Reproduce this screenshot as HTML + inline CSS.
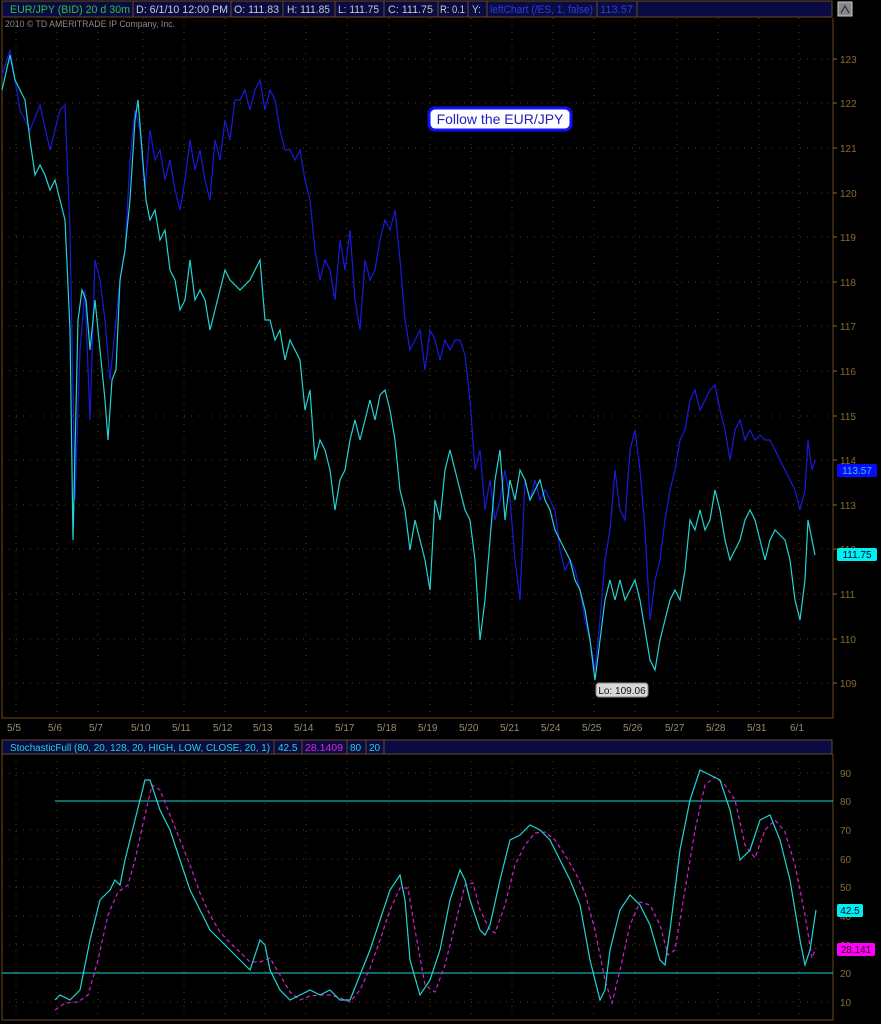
<!DOCTYPE html>
<html><head><meta charset="utf-8"><style>
html,body{margin:0;padding:0;background:#000;width:881px;height:1024px;overflow:hidden}
svg{display:block;font-family:"Liberation Sans",sans-serif}
</style></head><body>
<svg width="881" height="1024" viewBox="0 0 881 1024" xmlns="http://www.w3.org/2000/svg">
<rect width="881" height="1024" fill="#000"/>
<rect x="2" y="1" width="830" height="16" fill="#0b0b44" stroke="#6a4a1e"/>
<g stroke="#6a4a1e"><line x1="133" y1="1" x2="133" y2="17"/><line x1="231" y1="1" x2="231" y2="17"/><line x1="283" y1="1" x2="283" y2="17"/><line x1="335" y1="1" x2="335" y2="17"/><line x1="384" y1="1" x2="384" y2="17"/><line x1="438" y1="1" x2="438" y2="17"/><line x1="468" y1="1" x2="468" y2="17"/><line x1="487" y1="1" x2="487" y2="17"/><line x1="597" y1="1" x2="597" y2="17"/><line x1="637" y1="1" x2="637" y2="17"/></g>
<g font-size="11" fill="#c8c8c8">
<text x="10" y="13" fill="#2fbf3a" textLength="120" lengthAdjust="spacingAndGlyphs">EUR/JPY (BID) 20 d 30m</text>
<text x="136" y="13" textLength="92" lengthAdjust="spacingAndGlyphs">D: 6/1/10 12:00 PM</text>
<text x="234" y="13" textLength="45" lengthAdjust="spacingAndGlyphs">O: 111.83</text>
<text x="287" y="13" textLength="43" lengthAdjust="spacingAndGlyphs">H: 111.85</text>
<text x="338" y="13" textLength="41" lengthAdjust="spacingAndGlyphs">L: 111.75</text>
<text x="388" y="13" textLength="45" lengthAdjust="spacingAndGlyphs">C: 111.75</text>
<text x="440" y="13" textLength="25" lengthAdjust="spacingAndGlyphs">R: 0.1</text>
<text x="472" y="13" textLength="9" lengthAdjust="spacingAndGlyphs">Y:</text>
<text x="490" y="13" fill="#2a3de0" textLength="103" lengthAdjust="spacingAndGlyphs">leftChart (/ES, 1, false)</text>
<text x="600" y="13" fill="#2a3de0" textLength="33" lengthAdjust="spacingAndGlyphs">113.57</text>
</g>
<rect x="838" y="2" width="14" height="14" fill="#888" stroke="#ccc"/><path d="M841 13 L845 6 L849 13" stroke="#222" fill="none"/>
<text x="5" y="27" font-size="9" fill="#8a8a8a" textLength="170" lengthAdjust="spacingAndGlyphs">2010 © TD AMERITRADE IP Company, Inc.</text>
<path d="M2 18 V718 H833 V18" stroke="#6a4a1e" fill="none"/>
<g stroke="#5a3e16" stroke-dasharray="1 6">
<line x1="16" y1="18" x2="16" y2="718"/><line x1="57" y1="18" x2="57" y2="718"/><line x1="98" y1="18" x2="98" y2="718"/><line x1="143" y1="18" x2="143" y2="718"/><line x1="184" y1="18" x2="184" y2="718"/><line x1="225" y1="18" x2="225" y2="718"/><line x1="265" y1="18" x2="265" y2="718"/><line x1="306" y1="18" x2="306" y2="718"/><line x1="347" y1="18" x2="347" y2="718"/><line x1="389" y1="18" x2="389" y2="718"/><line x1="430" y1="18" x2="430" y2="718"/><line x1="471" y1="18" x2="471" y2="718"/><line x1="512" y1="18" x2="512" y2="718"/><line x1="553" y1="18" x2="553" y2="718"/><line x1="594" y1="18" x2="594" y2="718"/><line x1="635" y1="18" x2="635" y2="718"/><line x1="677" y1="18" x2="677" y2="718"/><line x1="718" y1="18" x2="718" y2="718"/><line x1="759" y1="18" x2="759" y2="718"/><line x1="799" y1="18" x2="799" y2="718"/>
<line x1="2" y1="59" x2="833" y2="59"/><line x1="2" y1="103" x2="833" y2="103"/><line x1="2" y1="148" x2="833" y2="148"/><line x1="2" y1="193" x2="833" y2="193"/><line x1="2" y1="237" x2="833" y2="237"/><line x1="2" y1="282" x2="833" y2="282"/><line x1="2" y1="326" x2="833" y2="326"/><line x1="2" y1="371" x2="833" y2="371"/><line x1="2" y1="416" x2="833" y2="416"/><line x1="2" y1="460" x2="833" y2="460"/><line x1="2" y1="505" x2="833" y2="505"/><line x1="2" y1="549" x2="833" y2="549"/><line x1="2" y1="594" x2="833" y2="594"/><line x1="2" y1="639" x2="833" y2="639"/><line x1="2" y1="683" x2="833" y2="683"/>
</g>
<g font-size="10" fill="#8a6a2e"><text x="840" y="63">123</text><text x="840" y="107">122</text><text x="840" y="152">121</text><text x="840" y="197">120</text><text x="840" y="241">119</text><text x="840" y="286">118</text><text x="840" y="330">117</text><text x="840" y="375">116</text><text x="840" y="420">115</text><text x="840" y="464">114</text><text x="840" y="509">113</text><text x="840" y="553">112</text><text x="840" y="598">111</text><text x="840" y="643">110</text><text x="840" y="687">109</text></g>
<g stroke="#8a6a2e"><line x1="833" y1="59" x2="837" y2="59"/><line x1="833" y1="103" x2="837" y2="103"/><line x1="833" y1="148" x2="837" y2="148"/><line x1="833" y1="193" x2="837" y2="193"/><line x1="833" y1="237" x2="837" y2="237"/><line x1="833" y1="282" x2="837" y2="282"/><line x1="833" y1="326" x2="837" y2="326"/><line x1="833" y1="371" x2="837" y2="371"/><line x1="833" y1="416" x2="837" y2="416"/><line x1="833" y1="460" x2="837" y2="460"/><line x1="833" y1="505" x2="837" y2="505"/><line x1="833" y1="549" x2="837" y2="549"/><line x1="833" y1="594" x2="837" y2="594"/><line x1="833" y1="639" x2="837" y2="639"/><line x1="833" y1="683" x2="837" y2="683"/></g>
<g font-size="10" fill="#9a8a70"><text x="7" y="731">5/5</text><text x="48" y="731">5/6</text><text x="89" y="731">5/7</text><text x="131" y="731">5/10</text><text x="172" y="731">5/11</text><text x="213" y="731">5/12</text><text x="253" y="731">5/13</text><text x="294" y="731">5/14</text><text x="335" y="731">5/17</text><text x="377" y="731">5/18</text><text x="418" y="731">5/19</text><text x="459" y="731">5/20</text><text x="500" y="731">5/21</text><text x="541" y="731">5/24</text><text x="582" y="731">5/25</text><text x="623" y="731">5/26</text><text x="665" y="731">5/27</text><text x="706" y="731">5/28</text><text x="747" y="731">5/31</text><text x="790" y="731">6/1</text></g>
<polyline fill="none" stroke="#1a1adc" stroke-width="1.2" points="2,75 10,50 20,110 30,130 40,105 50,150 60,110 65,105 70,230 75,500 80,350 85,290 90,420 95,260 100,280 105,320 110,380 115,330 120,280 125,250 130,160 135,110 140,130 145,190 150,130 155,160 160,150 165,180 170,160 175,190 180,210 185,180 190,140 195,170 200,150 205,180 210,200 215,140 220,160 225,120 230,140 235,100 240,100 245,90 250,110 255,90 260,80 265,110 270,90 275,100 280,130 285,150 290,150 295,160 300,150 305,180 310,200 315,250 320,280 325,260 330,270 335,300 340,240 345,270 350,230 355,300 360,330 365,260 370,280 375,270 380,240 385,220 390,230 395,210 400,260 405,320 410,350 415,340 420,330 425,370 430,330 435,340 440,360 445,340 450,350 455,340 460,340 465,355 470,400 475,470 480,450 485,510 490,480 495,520 500,500 505,470 510,500 515,560 520,600 525,480 530,500 535,480 540,500 545,490 550,500 555,510 560,550 565,570 570,560 575,570 580,590 585,620 590,640 595,670 600,620 605,560 610,530 615,470 620,510 625,520 630,450 635,430 640,470 645,530 650,620 655,580 660,560 665,520 670,490 675,470 680,440 685,430 690,400 695,390 700,410 705,400 710,390 715,385 720,410 725,430 730,460 735,430 740,420 745,440 750,430 755,440 760,435 765,440 770,440 775,450 780,460 785,470 790,480 795,490 800,510 805,490 808,440 812,470 815,460"/>
<polyline fill="none" stroke="#22d4d4" stroke-width="1.2" points="2,90 10,55 15,80 20,90 25,100 30,140 35,175 40,165 45,175 50,190 55,180 60,200 65,220 70,330 73,540 78,320 82,290 86,300 90,350 95,300 100,350 105,400 108,440 112,380 116,370 120,280 125,250 130,200 135,120 138,100 142,150 146,200 150,220 155,210 160,240 165,230 170,270 175,280 180,310 185,300 190,260 195,300 200,290 205,300 210,330 215,310 220,290 225,270 230,280 240,290 250,280 255,270 260,260 265,320 270,320 275,340 280,330 285,360 290,340 295,350 300,360 305,410 310,390 315,460 320,440 325,450 330,470 335,510 340,480 345,470 350,440 355,420 360,440 365,420 370,400 375,420 380,395 385,390 390,410 395,440 400,490 405,510 410,550 415,520 420,540 425,560 430,590 435,500 440,520 445,470 450,450 455,470 460,490 465,510 470,520 475,560 480,640 485,600 490,540 495,480 500,450 505,520 510,480 515,500 520,470 525,480 530,500 535,490 540,480 545,500 550,510 555,530 560,540 565,550 570,560 575,580 580,590 585,610 590,640 595,680 600,640 605,600 610,580 615,600 620,580 625,600 630,590 635,580 640,600 645,630 650,660 655,670 660,640 665,620 670,600 675,590 680,600 685,570 690,520 695,530 700,510 705,530 710,520 715,490 720,510 725,540 730,560 735,550 740,540 745,520 750,510 755,520 760,540 765,560 770,540 775,530 780,535 785,540 790,560 795,600 800,620 805,580 808,520 812,540 815,555"/>
<rect x="429" y="108" width="142" height="22" rx="6" fill="#fff" stroke="#1010ff" stroke-width="3"/>
<text x="500" y="124" font-size="14" fill="#2020c0" text-anchor="middle">Follow the EUR/JPY</text>
<rect x="596" y="683" width="52" height="14" rx="3" fill="#d8d8d8" stroke="#888"/>
<text x="622" y="694" font-size="10" fill="#111" text-anchor="middle">Lo: 109.06</text>
<rect x="837" y="464" width="40" height="13" rx="2" fill="#0a0aff"/><text x="857" y="474" font-size="10" fill="#22d4d4" text-anchor="middle">113.57</text>
<rect x="837" y="548" width="40" height="13" rx="2" fill="#00f0f0"/><text x="857" y="558" font-size="10" fill="#003" text-anchor="middle">111.75</text>
<rect x="2" y="740" width="830" height="14" fill="#0b0b44" stroke="#6a4a1e"/>
<g stroke="#6a4a1e"><line x1="274" y1="740" x2="274" y2="754"/><line x1="302" y1="740" x2="302" y2="754"/><line x1="347" y1="740" x2="347" y2="754"/><line x1="366" y1="740" x2="366" y2="754"/><line x1="384" y1="740" x2="384" y2="754"/></g>
<g font-size="10" fill="#22d4d4"><text x="10" y="751" textLength="260" lengthAdjust="spacingAndGlyphs">StochasticFull (80, 20, 128, 20, HIGH, LOW, CLOSE, 20, 1)</text><text x="278" y="751">42.5</text><text x="305" y="751" fill="#e020e0" textLength="38" lengthAdjust="spacingAndGlyphs">28.1409</text><text x="350" y="751">80</text><text x="369" y="751">20</text></g>
<path d="M2 754 V1020 H833 V754" stroke="#6a4a1e" fill="none"/>
<g stroke="#5a3e16" stroke-dasharray="1 6">
<line x1="16" y1="754" x2="16" y2="1020"/><line x1="57" y1="754" x2="57" y2="1020"/><line x1="98" y1="754" x2="98" y2="1020"/><line x1="143" y1="754" x2="143" y2="1020"/><line x1="184" y1="754" x2="184" y2="1020"/><line x1="225" y1="754" x2="225" y2="1020"/><line x1="265" y1="754" x2="265" y2="1020"/><line x1="306" y1="754" x2="306" y2="1020"/><line x1="347" y1="754" x2="347" y2="1020"/><line x1="389" y1="754" x2="389" y2="1020"/><line x1="430" y1="754" x2="430" y2="1020"/><line x1="471" y1="754" x2="471" y2="1020"/><line x1="512" y1="754" x2="512" y2="1020"/><line x1="553" y1="754" x2="553" y2="1020"/><line x1="594" y1="754" x2="594" y2="1020"/><line x1="635" y1="754" x2="635" y2="1020"/><line x1="677" y1="754" x2="677" y2="1020"/><line x1="718" y1="754" x2="718" y2="1020"/><line x1="759" y1="754" x2="759" y2="1020"/><line x1="799" y1="754" x2="799" y2="1020"/>
<line x1="2" y1="773" x2="833" y2="773"/><line x1="2" y1="830" x2="833" y2="830"/><line x1="2" y1="859" x2="833" y2="859"/><line x1="2" y1="887" x2="833" y2="887"/><line x1="2" y1="916" x2="833" y2="916"/><line x1="2" y1="945" x2="833" y2="945"/><line x1="2" y1="1002" x2="833" y2="1002"/>
</g>
<line x1="55" y1="801" x2="833" y2="801" stroke="#22d4d4"/>
<line x1="2" y1="973" x2="833" y2="973" stroke="#22d4d4"/>
<g font-size="10" fill="#8a6a2e"><text x="840" y="777">90</text><text x="840" y="805">80</text><text x="840" y="834">70</text><text x="840" y="863">60</text><text x="840" y="891">50</text><text x="840" y="920">40</text><text x="840" y="949">30</text><text x="840" y="977">20</text><text x="840" y="1006">10</text></g>
<polyline fill="none" stroke="#d020d0" stroke-width="1.2" stroke-dasharray="4 3" points="55,1010 65,1003 78,1002 88,995 98,960 108,915 118,892 128,885 135,860 145,815 152,785 160,790 170,815 180,840 190,865 200,893 210,915 220,932 230,943 240,952 250,962 260,962 270,958 280,975 290,992 300,1000 310,996 320,995 330,995 340,998 350,1002 360,990 370,968 380,940 390,910 400,888 408,888 415,930 425,985 435,992 445,965 455,925 465,885 473,883 480,910 490,930 495,933 505,905 515,865 525,845 535,833 545,832 555,840 565,855 575,872 585,893 595,930 605,980 612,1003 620,970 630,925 640,902 650,905 660,925 668,955 675,950 685,890 695,830 705,785 715,777 725,785 735,800 745,845 755,858 765,830 775,820 785,832 795,865 805,915 812,958 816,948"/>
<polyline fill="none" stroke="#22d4d4" stroke-width="1.2" points="55,1000 60,995 70,1000 80,990 90,940 100,900 110,890 115,880 120,885 125,860 135,820 145,780 150,780 160,810 170,830 180,860 190,890 200,910 210,930 220,940 230,950 240,960 250,970 260,940 265,945 270,970 280,990 290,1000 300,995 310,990 320,995 330,990 340,1000 350,1000 360,975 370,950 380,920 390,890 400,875 405,900 410,960 420,995 430,980 440,950 450,900 460,870 465,880 470,900 480,930 485,935 490,925 500,880 510,840 520,835 530,825 540,830 550,840 560,860 570,880 580,905 590,960 600,1000 605,990 610,950 620,910 630,895 640,905 650,925 660,960 665,965 670,930 680,850 690,800 700,770 710,775 720,780 730,810 740,860 750,850 760,820 770,815 780,840 790,880 800,940 805,965 810,950 816,910"/>
<rect x="837" y="904" width="26" height="13" rx="2" fill="#00f0f0"/><text x="850" y="914" font-size="10" fill="#003" text-anchor="middle">42.5</text>
<rect x="837" y="943" width="38" height="13" rx="2" fill="#ff00ff"/><text x="856" y="953" font-size="10" fill="#300" text-anchor="middle">28.141</text>
</svg>
</body></html>
